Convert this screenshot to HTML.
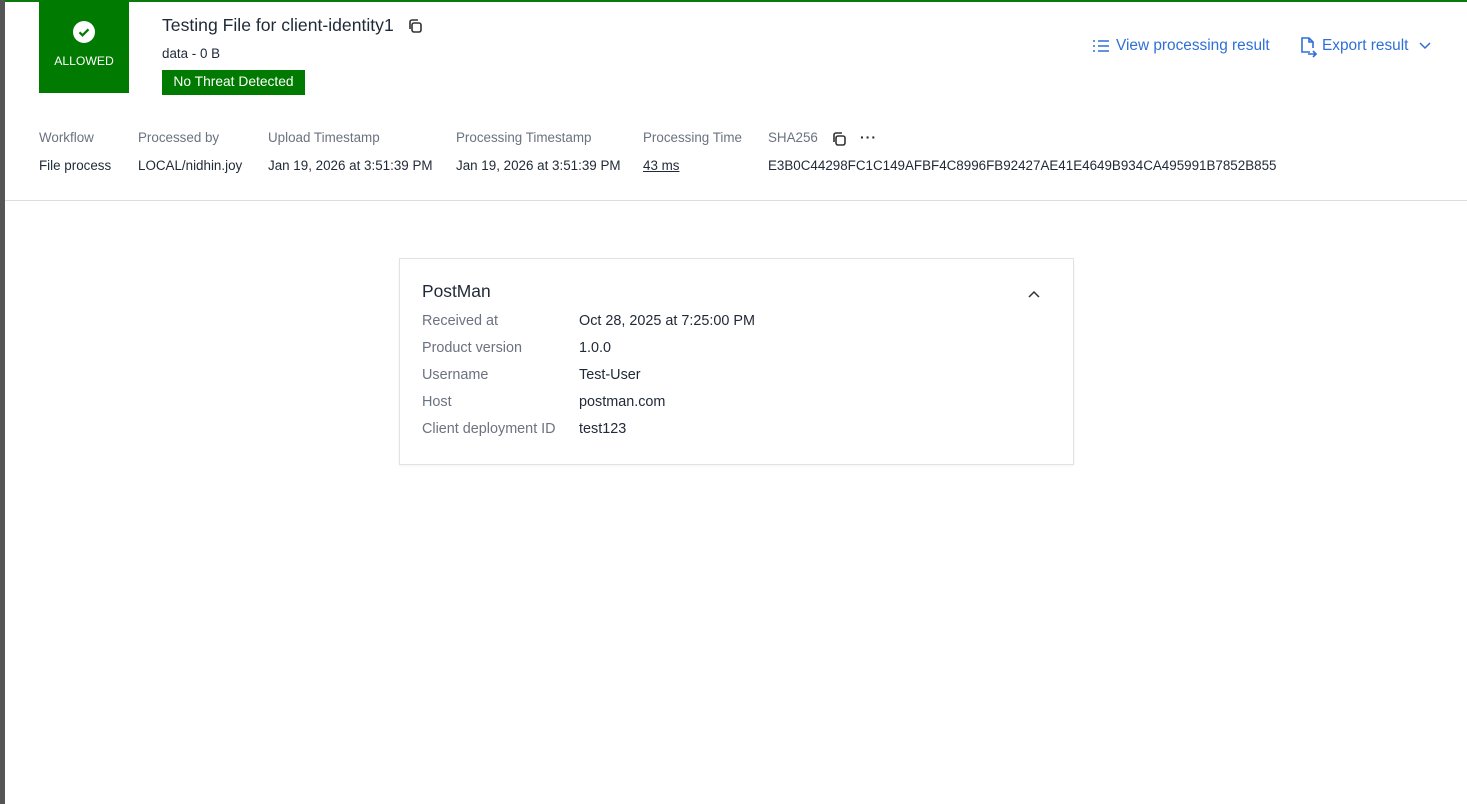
<!DOCTYPE html>
<html><head><meta charset="utf-8"><style>
*{margin:0;padding:0;box-sizing:border-box}
body{width:1467px;height:804px;background:#fff;font-family:"Liberation Sans",sans-serif;color:#1f2937;position:relative;overflow:hidden;font-size:13.4px}
.a{position:absolute;white-space:nowrap}
.lbl{color:#6b7280}
.blue{color:#2f6fd6}
.c{font-size:14.4px}
</style></head><body>
<div class="a" style="left:0;top:0;width:5px;height:804px;background:#555"></div>
<div class="a" style="left:5px;top:0;width:1462px;height:2px;background:#0a7a0a"></div>
<div class="a" style="left:39px;top:0;width:90px;height:93px;background:#007a00"></div>
<svg class="a" style="left:72px;top:20px" width="24" height="24"><circle cx="12" cy="12" r="11" fill="#fff"/><path d="M7.5 12.3l3 3 6-6" stroke="#007a00" stroke-width="2.2" fill="none"/></svg>
<div class="a" style="left:39px;top:54px;width:90px;text-align:center;color:#fff;font-size:12.2px">ALLOWED</div>
<div class="a" style="left:162px;top:15px;font-size:17.6px;color:#1f2937">Testing File for client-identity1</div>
<svg class="a" style="left:407px;top:18px" width="16" height="16" fill="none" stroke="#333" stroke-width="1.6"><rect x="5" y="5" width="9" height="9" rx="2"/><path d="M3 11V4a2 2 0 0 1 2-2h6"/></svg>
<div class="a" style="left:162px;top:46px">data - 0 B</div>
<div class="a" style="left:162px;top:70px;width:143px;height:25px;background:#007a00;color:#fff;text-align:center;line-height:24px;font-size:13.8px">No Threat Detected</div>
<svg class="a" style="left:1092px;top:38px" width="18" height="16" stroke="#2f6fd6" stroke-width="1.6"><path d="M1 3h2M6 3h11M1 8h2M6 8h11M1 13h2M6 13h11"/></svg>
<div class="a blue" style="left:1116px;top:37px;font-size:15.4px">View processing result</div>
<svg class="a" style="left:1298px;top:36px" width="20" height="22" fill="none" stroke="#2f6fd6" stroke-width="1.6"><path d="M12 16H4V2h7l4 4v6M11 2v4h4"/><path d="M10 18h8M15 15l3 3-3 3"/></svg>
<div class="a blue" style="left:1322px;top:37px;font-size:15.4px">Export result</div>
<svg class="a" style="left:1419px;top:42px" width="12" height="8" fill="none" stroke="#2f6fd6" stroke-width="1.5"><path d="M1 1l5 5 5-5"/></svg>

<div class="a lbl" style="left:39px;top:130px">Workflow</div>
<div class="a" style="left:39px;top:158px">File process</div>
<div class="a lbl" style="left:138px;top:130px">Processed by</div>
<div class="a" style="left:138px;top:158px">LOCAL/nidhin.joy</div>
<div class="a lbl" style="left:268px;top:130px">Upload Timestamp</div>
<div class="a" style="left:268px;top:158px">Jan 19, 2026 at 3:51:39 PM</div>
<div class="a lbl" style="left:456px;top:130px">Processing Timestamp</div>
<div class="a" style="left:456px;top:158px">Jan 19, 2026 at 3:51:39 PM</div>
<div class="a lbl" style="left:643px;top:130px">Processing Time</div>
<div class="a" style="left:643px;top:158px;text-decoration:underline">43 ms</div>
<div class="a lbl" style="left:768px;top:130px">SHA256</div>
<svg class="a" style="left:831px;top:131px" width="16" height="16" fill="none" stroke="#333" stroke-width="1.6"><rect x="5" y="5" width="9" height="9" rx="2"/><path d="M3 11V4a2 2 0 0 1 2-2h6"/></svg>
<div class="a" style="left:860px;top:129px;font-size:14px;font-weight:bold;letter-spacing:1px">···</div>
<div class="a" style="left:768px;top:158px">E3B0C44298FC1C149AFBF4C8996FB92427AE41E4649B934CA495991B7852B855</div>
<div class="a" style="left:5px;top:200px;width:1462px;height:1px;background:#ddd"></div>

<div class="a" style="left:399px;top:258px;width:675px;height:207px;border:1px solid #e2e2e2;box-shadow:0 1px 2px rgba(0,0,0,.05)"></div>
<div class="a" style="left:422px;top:281px;font-size:17.4px">PostMan</div>
<svg class="a" style="left:1028px;top:290px" width="12" height="8" fill="none" stroke="#333" stroke-width="1.5"><path d="M1 7l5-5 5 5"/></svg>
<div class="a lbl c" style="left:422px;top:313px">Received at</div><div class="a c" style="left:579px;top:313px">Oct 28, 2025 at 7:25:00 PM</div>
<div class="a lbl c" style="left:422px;top:340px">Product version</div><div class="a c" style="left:579px;top:340px">1.0.0</div>
<div class="a lbl c" style="left:422px;top:367px">Username</div><div class="a c" style="left:579px;top:367px">Test-User</div>
<div class="a lbl c" style="left:422px;top:394px">Host</div><div class="a c" style="left:579px;top:394px">postman.com</div>
<div class="a lbl c" style="left:422px;top:421px">Client deployment ID</div><div class="a c" style="left:579px;top:421px">test123</div>
</body></html>
